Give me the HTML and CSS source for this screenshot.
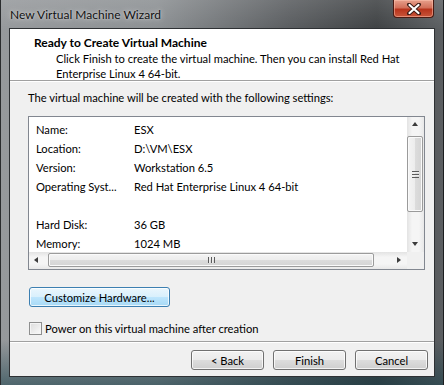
FILE: index.html
```
<!DOCTYPE html>
<html>
<head>
<meta charset="utf-8">
<link rel="stylesheet" href="styles.css">
</head>
<body>
<div class="window">
  <div class="titlebar">
    <span class="title">New Virtual Machine Wizard</span>
    <div class="close">
      <svg width="16" height="12" viewBox="0 0 16 12"><path d="M3 1.5 L13 10.5 M13 1.5 L3 10.5" stroke="#3a1a14" stroke-width="4" stroke-linecap="round"/><path d="M3.5 2 L12.5 10 M12.5 2 L3.5 10" stroke="#ffffff" stroke-width="2.2" stroke-linecap="round"/></svg>
    </div>
  </div>
  <div class="client">
    <div class="header">
      <div class="h-title">Ready to Create Virtual Machine</div>
      <div class="h-sub">Click Finish to create the virtual machine. Then you can install Red Hat<br>Enterprise Linux 4 64-bit.</div>
    </div>
    <div class="body">
      <div class="intro">The virtual machine will be created with the following settings:</div>
      <div class="list">
        <div class="list-content">
          <div class="row"><span class="k">Name:</span><span class="v">ESX</span></div>
          <div class="row"><span class="k">Location:</span><span class="v">D:\VM\ESX</span></div>
          <div class="row"><span class="k">Version:</span><span class="v">Workstation 6.5</span></div>
          <div class="row"><span class="k">Operating Syst...</span><span class="v">Red Hat Enterprise Linux 4 64-bit</span></div>
          <div class="row"><span class="k"></span><span class="v"></span></div>
          <div class="row"><span class="k">Hard Disk:</span><span class="v">36 GB</span></div>
          <div class="row"><span class="k">Memory:</span><span class="v">1024 MB</span></div>
        </div>
        <div class="vscroll">
          <div class="arrow up"></div>
          <div class="vtrack"><div class="vthumb"><span class="grip-h"></span></div></div>
          <div class="arrow down"></div>
        </div>
        <div class="hscroll">
          <div class="arrow left"></div>
          <div class="htrack"><div class="hthumb"><span class="grip-v"></span></div></div>
          <div class="arrow right"></div>
        </div>
        <div class="corner"></div>
      </div>
      <div class="custom-row"><button class="btn hot">Customize Hardware...</button></div>
      <label class="check"><span class="box"></span>Power on this virtual machine after creation</label>
    </div>
    <div class="footer">
      <button class="btn nav">&lt; Back</button>
      <button class="btn nav">Finish</button>
      <button class="btn nav">Cancel</button>
    </div>
  </div>
</div>
</body>
</html>
```
FILE: styles.css
```
html, body {
  margin: 0;
  padding: 0;
  background: #1b1f22;
}
body {
  font-family: Lato, "Noto Sans", sans-serif;
  font-size: 11.2px;
  color: #000;
}
.window {
  width: 444px;
  height: 385px;
  box-sizing: border-box;
  padding: 0 8px 8px 8px;
  display: flex;
  flex-direction: column;
  background:
    linear-gradient(to bottom, rgba(255,255,255,0.12), rgba(0,0,0,0) 30px),
    linear-gradient(to bottom, rgba(0,0,0,0) 340px, rgba(20,60,70,0.55) 385px),
    linear-gradient(to right, #96999c 0%, #8c9093 35%, #5a5d60 65%, #3f4244 85%, #5c5f62 100%);
  border-left: 1px solid #2a2c2e;
  border-right: 1px solid #1c1e20;
}
.titlebar {
  height: 28px;
  flex: none;
  display: flex;
  align-items: flex-start;
  justify-content: space-between;
}
.title {
  margin: 7px 0 0 1px;
  font-size: 12px;
  color: #111;
  white-space: nowrap;
  text-shadow: 0 0 6px rgba(255,255,255,0.6), 0 0 2px rgba(255,255,255,0.5);
}
.close {
  width: 41px;
  height: 18px;
  margin-right: 1px;
  box-sizing: border-box;
  border: 1px solid #4a1a12;
  border-top: none;
  border-radius: 0 0 4px 4px;
  background: linear-gradient(to bottom, #e7a08c 0%, #d2705a 45%, #b8341c 55%, #c9553a 100%);
  box-shadow: inset 0 0 0 1px rgba(255,200,180,0.5);
  display: flex;
  align-items: center;
  justify-content: center;
}
.client {
  flex: 1;
  display: flex;
  flex-direction: column;
  background: #f0f0f0;
  border: 1px solid #2e3134;
}
.header {
  background: #fff;
  height: 52px;
  box-sizing: border-box;
  padding: 6px 0 0 24px;
  border-bottom: 1px solid #a0a0a0;
  flex: none;
  white-space: nowrap;
}
.h-title {
  font-weight: bold;
  font-size: 12px;
  line-height: 16px;
}
.h-sub {
  margin-left: 22px;
  line-height: 15px;
}
.body {
  padding: 8px 9px 0 18px;
  flex: 1;
  border-top: 1px solid #fff;
}
.intro {
  line-height: 16px;
  white-space: nowrap;
}
.list {
  margin-top: 10px;
  height: 154px;
  box-sizing: border-box;
  border: 1px solid #828790;
  background: #fff;
  display: grid;
  grid-template-columns: 1fr 17px;
  grid-template-rows: 1fr 17px;
}
.list-content {
  padding: 3px 0 0 7px;
  overflow: hidden;
}
.row {
  display: flex;
  height: 19px;
  line-height: 19px;
  white-space: nowrap;
}
.k { width: 98px; flex: none; }
.vscroll {
  display: flex;
  flex-direction: column;
  background: linear-gradient(to right, #e3e3e3, #f5f5f5 30%, #f5f5f5 70%, #e8e8e8);
}
.hscroll {
  display: flex;
  background: linear-gradient(to bottom, #e3e3e3, #f5f5f5 30%, #f5f5f5 70%, #e8e8e8);
}
.corner { background: #f0f0f0; }
.arrow {
  flex: none;
  width: 17px;
  height: 17px;
  position: relative;
}
.arrow::after {
  content: "";
  position: absolute;
  width: 0;
  height: 0;
  border: 3px solid transparent;
}
.arrow.up::after { left: 5px; top: 5px; border-bottom: 4px solid #3c3c3c; border-top: 0; border-left-width: 3.5px; border-right-width: 3.5px; }
.arrow.down::after { left: 5px; top: 7px; border-top: 4px solid #3c3c3c; border-bottom: 0; border-left-width: 3.5px; border-right-width: 3.5px; }
.arrow.left::after { left: 5px; top: 5px; border-right: 4px solid #3c3c3c; border-left: 0; border-top-width: 3.5px; border-bottom-width: 3.5px; }
.arrow.right::after { left: 7px; top: 5px; border-left: 4px solid #3c3c3c; border-right: 0; border-top-width: 3.5px; border-bottom-width: 3.5px; }
.vtrack {
  flex: 1;
  padding: 2px 1px 0 0;
}
.vthumb {
  height: 76px;
  box-sizing: border-box;
  border: 1px solid #9b9b9b;
  border-radius: 2px;
  background: linear-gradient(to right, #f4f4f4, #ececec 50%, #dcdcdc 51%, #d4d4d4);
  box-shadow: inset 0 0 0 1px #fafafa;
  display: flex;
  align-items: center;
  justify-content: center;
}
.htrack {
  flex: 1;
  padding: 1px 0 0 2px;
  display: flex;
}
.hthumb {
  width: 326px;
  height: 14px;
  box-sizing: border-box;
  border: 1px solid #9b9b9b;
  border-radius: 2px;
  background: linear-gradient(to bottom, #f4f4f4, #ececec 50%, #dcdcdc 51%, #d4d4d4);
  box-shadow: inset 0 0 0 1px #fafafa;
  display: flex;
  align-items: center;
  justify-content: center;
}
.grip-h {
  width: 7px;
  height: 7px;
  background: repeating-linear-gradient(to bottom, #5b5b5b 0 1px, #eeeeee 1px 2px, transparent 2px 3px);
}
.grip-v {
  width: 7px;
  height: 6px;
  background: repeating-linear-gradient(to right, #5b5b5b 0 1px, #eeeeee 1px 2px, transparent 2px 3px);
}
.custom-row {
  margin-top: 17px;
  display: flex;
}
.btn {
  font-family: inherit;
  font-size: 11.2px;
  color: #000;
  height: 20px;
  box-sizing: border-box;
  padding: 0;
  border: 1px solid #707070;
  border-radius: 3px;
  background: linear-gradient(to bottom, #f2f2f2 0%, #ebebeb 49%, #dddddd 50%, #cfcfcf 100%);
  box-shadow: inset 0 0 0 1px rgba(255,255,255,0.75);
  line-height: 17px;
}
.btn.hot {
  width: 141px;
  margin-left: 1px;
  border-color: #3c7fb1;
  background: linear-gradient(to bottom, #eaf6fd 0%, #d9f0fc 49%, #bee6fd 50%, #a7d9f5 100%);
}
.check {
  margin-top: 15px;
  margin-left: 1px;
  display: flex;
  align-items: center;
  height: 13px;
  line-height: 13px;
}
.box {
  width: 13px;
  height: 13px;
  box-sizing: border-box;
  border: 1px solid #8e8f8f;
  background: linear-gradient(135deg, #dcdcdc, #fafafa);
  box-shadow: inset 0 0 0 1px #f4f4f4;
  margin-right: 3px;
  flex: none;
}
.footer {
  flex: none;
  height: 35px;
  box-sizing: border-box;
  border-top: 1px solid #a0a0a0;
  box-shadow: inset 0 1px 0 #fff;
  display: flex;
  justify-content: flex-end;
  gap: 9px;
  padding: 8px 6px 0 0;
}
.btn.nav {
  width: 73px;
}
```
